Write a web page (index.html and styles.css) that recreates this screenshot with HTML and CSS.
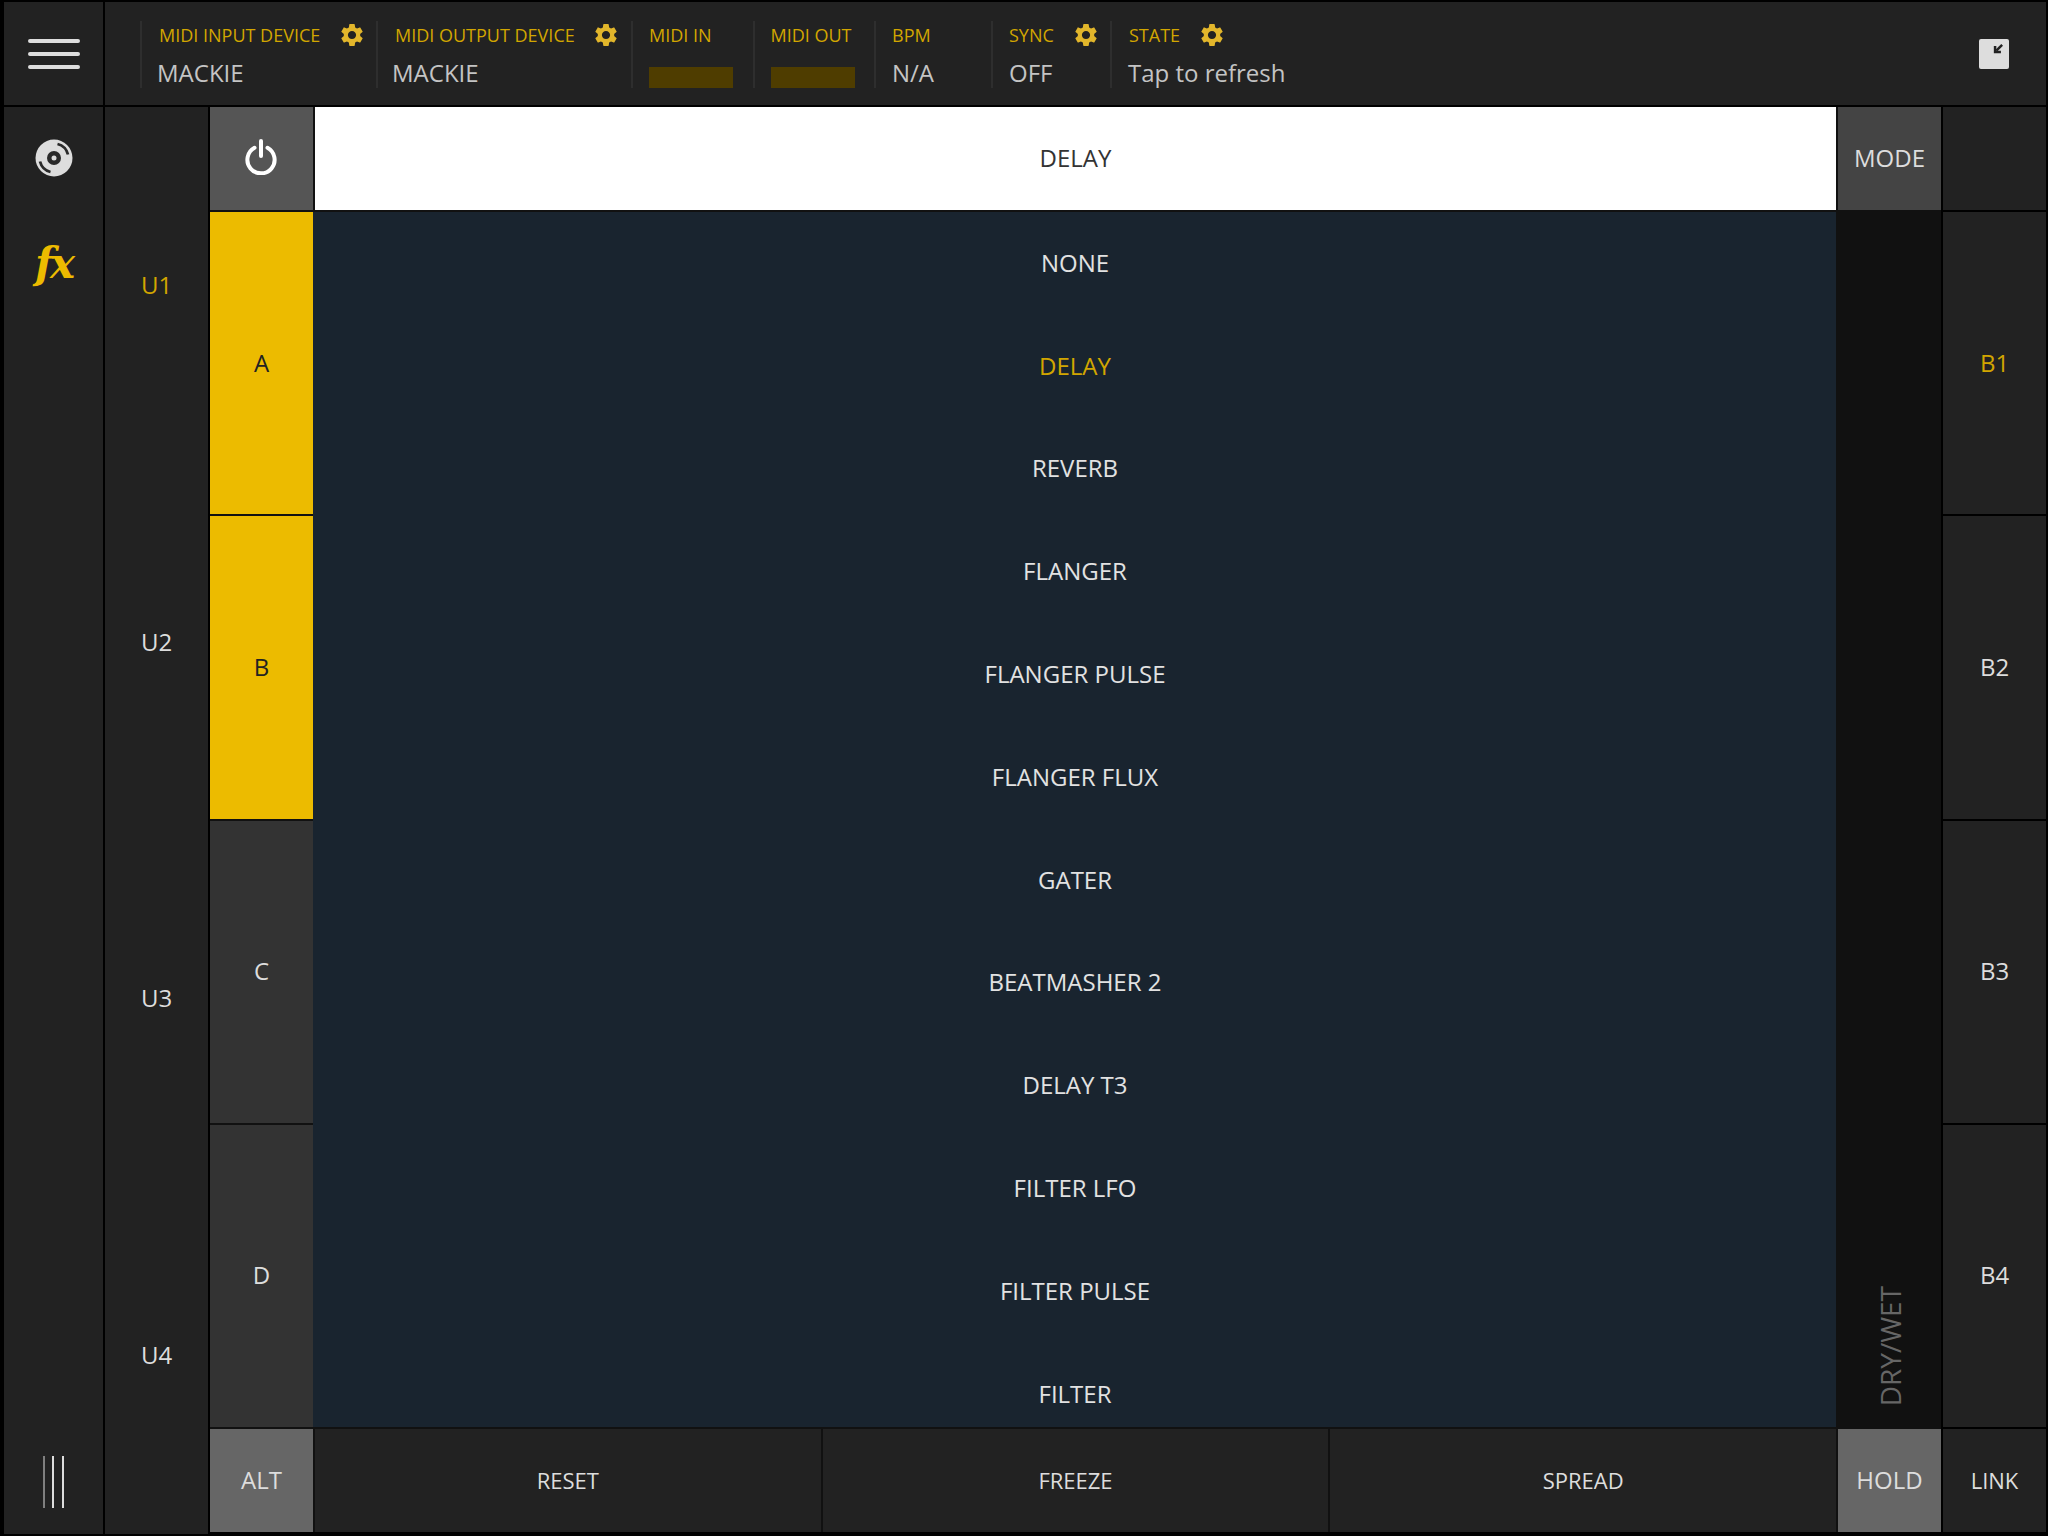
FILE: index.html
```html
<!DOCTYPE html>
<html lang="en">
<head>
  <meta charset="UTF-8" />
  <title>FX Controller</title>
  <link rel="stylesheet" href="styles.css">
</head>
<body>
  <svg class="defs" width="0" height="0">
    <symbol id="gear" viewBox="2.5 1.5 19 21">
      <path fill-rule="evenodd" d="M19.14 12.94c.04-.3.06-.61.06-.94 0-.32-.02-.64-.07-.94l2.03-1.58a.49.49 0 0 0 .12-.61l-1.92-3.32a.488.488 0 0 0-.59-.22l-2.39.96c-.5-.38-1.03-.7-1.62-.94l-.36-2.54a.484.484 0 0 0-.48-.41h-3.84c-.24 0-.43.17-.47.41l-.36 2.54c-.59.24-1.13.57-1.62.94l-2.39-.96c-.22-.08-.47 0-.59.22L2.74 8.87c-.12.21-.08.47.12.61l2.03 1.58c-.05.3-.09.63-.09.94s.02.64.07.94l-2.03 1.58a.49.49 0 0 0-.12.61l1.92 3.32c.12.22.37.29.59.22l2.39-.96c.5.38 1.03.7 1.62.94l.36 2.54c.05.24.24.41.48.41h3.84c.24 0 .44-.17.47-.41l.36-2.54c.59-.24 1.13-.56 1.62-.94l2.39.96c.22.08.47 0 .59-.22l1.92-3.32c.12-.22.07-.47-.12-.61l-2.01-1.58zM12 15.6c-1.98 0-3.6-1.62-3.6-3.6s1.62-3.6 3.6-3.6 3.6 1.62 3.6 3.6-1.62 3.6-3.6 3.6z"/>
    </symbol>
  </svg>

  <div class="app">
    <div class="cell menu-btn">
      <svg width="52" height="32" viewBox="0 0 52 32"><path d="M2 3H50M2 16H50M2 29H50" stroke="#ddd" stroke-width="4" stroke-linecap="round"/></svg>
    </div>

    <header class="topbar">
      <div class="info w-input">
        <div class="info-label">MIDI INPUT DEVICE <svg class="gear"><use href="#gear"/></svg></div>
        <div class="info-value">MACKIE</div>
      </div>
      <div class="info w-output">
        <div class="info-label">MIDI OUTPUT DEVICE <svg class="gear"><use href="#gear"/></svg></div>
        <div class="info-value">MACKIE</div>
      </div>
      <div class="info w-midi">
        <div class="info-label">MIDI IN</div>
        <div class="led"></div>
      </div>
      <div class="info w-midi">
        <div class="info-label">MIDI OUT</div>
        <div class="led"></div>
      </div>
      <div class="info w-bpm">
        <div class="info-label">BPM</div>
        <div class="info-value">N/A</div>
      </div>
      <div class="info w-sync">
        <div class="info-label">SYNC <svg class="gear"><use href="#gear"/></svg></div>
        <div class="info-value">OFF</div>
      </div>
      <div class="info w-state">
        <div class="info-label">STATE <svg class="gear"><use href="#gear"/></svg></div>
        <div class="info-value">Tap to refresh</div>
      </div>
      <div class="restore">
        <svg width="10" height="10" viewBox="0 0 12 12"><path d="M11 1L4 8" stroke="#222" stroke-width="3"/><path d="M1 2.5V11H9.500V8H4V2.500Z" fill="#222"/></svg>
      </div>
    </header>

    <nav class="sidebar">
      <div class="side-item">
        <svg width="38" height="38" viewBox="0 0 38 38">
          <circle cx="19" cy="19" r="18.500" fill="#ddd"/>
          <circle cx="19" cy="19" r="7" fill="#2a2a2a"/>
          <circle cx="19" cy="19" r="2.500" fill="#ddd"/>
          <path d="M22.500 5A14.500 14.500 0 0 1 33 15.500M15.500 33A14.500 14.500 0 0 1 5 22.500" fill="none" stroke="#2a2a2a" stroke-width="2.800"/>
        </svg>
      </div>
      <div class="side-item fx-icon">fx</div>
      <div class="side-spacer"></div>
      <div class="side-item">
        <svg width="22" height="52" viewBox="0 0 22 52"><path d="M1 0V52" stroke="#ddd"/><path d="M10 0V52M20 0V52" stroke="#ddd" stroke-width="2"/></svg>
      </div>
    </nav>

    <div class="ucol">
      <div class="u-label on">U1</div>
      <div class="u-label">U2</div>
      <div class="u-label">U3</div>
      <div class="u-label">U4</div>
    </div>

    <div class="center">
      <div class="center-top">
        <div class="cell power">
          <svg width="32" height="36" viewBox="0 0 32 36"><path d="M9.500 8.800A13.600 13.600 0 1 0 22.500 8.800" fill="none" stroke="#fff" stroke-width="4" stroke-linecap="round"/><path d="M16 2V17" stroke="#fff" stroke-width="4" stroke-linecap="round"/></svg>
        </div>
        <div class="cell selected">DELAY</div>
        <div class="cell mode">MODE</div>
      </div>
      <div class="center-mid">
        <div class="pads">
          <div class="cell pad on">A</div>
          <div class="cell pad on">B</div>
          <div class="cell pad">C</div>
          <div class="cell pad">D</div>
        </div>
        <div class="fx-list">
          <div class="fx-item">NONE</div>
          <div class="fx-item on">DELAY</div>
          <div class="fx-item">REVERB</div>
          <div class="fx-item">FLANGER</div>
          <div class="fx-item">FLANGER PULSE</div>
          <div class="fx-item">FLANGER FLUX</div>
          <div class="fx-item">GATER</div>
          <div class="fx-item">BEATMASHER 2</div>
          <div class="fx-item">DELAY T3</div>
          <div class="fx-item">FILTER LFO</div>
          <div class="fx-item">FILTER PULSE</div>
          <div class="fx-item">FILTER</div>
        </div>
        <div class="drywet"><span>DRY/WET</span></div>
      </div>
      <div class="center-bottom">
        <div class="cell alt">ALT</div>
        <div class="cell act">RESET</div>
        <div class="cell act">FREEZE</div>
        <div class="cell act">SPREAD</div>
        <div class="cell alt">HOLD</div>
      </div>
    </div>

    <div class="bcol">
      <div class="cell"></div>
      <div class="cell b-btn on">B1</div>
      <div class="cell b-btn">B2</div>
      <div class="cell b-btn">B3</div>
      <div class="cell b-btn">B4</div>
      <div class="cell act">LINK</div>
    </div>
  </div>
</body>
</html>
```

FILE: styles.css
```css
* {
  box-sizing: border-box;
}
html, body {
  margin: 0;
  height: 100%;
}
body {
  background: #000;
  color: #ddd;
  font-family: "Open Sans", sans-serif;
  font-size: 24px;
  overflow: hidden;
}
.defs {
  position: absolute;
}
.app {
  display: grid;
  grid-template-columns: 99px 103px 1731px 103px;
  grid-template-rows: 103px 1427px;
  gap: 2px;
  padding: 2px 2px 0 4px;
  height: 1536px;
}
.cell {
  display: flex;
  align-items: center;
  justify-content: center;
  background: #222;
  padding-bottom: 2px;
}
.menu-btn {
  padding-bottom: 0;
}

/* top bar */
.topbar {
  grid-column: 2 / 5;
  display: flex;
  align-items: flex-start;
  background: #222;
  padding: 19px 37px 0 35px;
}
.info {
  height: 67px;
  border-left: 2px solid #2e2e2e;
  padding-left: 16px;
  flex: none;
}
.w-input { width: 236px; }
.w-output { width: 255px; }
.w-midi { width: 121.5px; }
.w-bpm { width: 117px; }
.w-sync { width: 119px; }
.w-state { width: 300px; }
.info-label {
  color: #d2a600;
  font-size: 18px;
  line-height: 28px;
  height: 28px;
  white-space: nowrap;
}
.w-input .info-label, .w-output .info-label, .w-state .info-label {
  margin-left: 1px;
}
.gear {
  width: 22px;
  height: 24px;
  fill: #e2b62b;
  margin-left: 16px;
  vertical-align: -5px;
}
.info-value {
  color: #c4c4c4;
  font-size: 24px;
  line-height: 34px;
  margin-top: 7px;
}
.w-input .info-value { margin-left: -1px; }
.w-output .info-value { margin-left: -2px; }
.led {
  width: 84px;
  height: 21px;
  margin: 18px 0 0 0;
  background: #4f3d00;
}
.restore {
  margin-left: auto;
  margin-top: 18px;
  width: 30px;
  height: 30px;
  border-radius: 2px;
  background: #ddd;
  display: flex;
  align-items: flex-start;
  justify-content: flex-end;
  padding: 5px 6px 0 0;
}

/* left columns */
.sidebar {
  background: #222;
  display: flex;
  flex-direction: column;
}
.side-item {
  height: 105px;
  flex: none;
  display: flex;
  align-items: center;
  justify-content: center;
  padding-bottom: 3px;
}
.side-item:last-child {
  padding-bottom: 0;
}
.side-spacer {
  flex: 1;
}
.fx-icon {
  color: #ecbb00;
  font-family: "DejaVu Serif", serif;
  font-style: italic;
  font-weight: bold;
  font-size: 42px;
  letter-spacing: -3px;
}
.ucol {
  background: #222;
  display: grid;
  grid-template-rows: repeat(4, 1fr);
}
.u-label {
  display: flex;
  align-items: center;
  justify-content: center;
  padding-bottom: 2px;
}
.u-label.on, .b-btn.on, .fx-item.on {
  color: #d2a600;
}

/* center panel */
.center {
  background: #111;
  display: grid;
  grid-template-rows: 103px 1215px 103px;
  row-gap: 2px;
  height: 1425px;
}
.center-top {
  display: grid;
  grid-template-columns: 103px 1523px 105px;
}
.center-top .selected {
  margin-left: 2px;
  background: #fff;
  color: #333;
}
.power {
  background: #555;
  padding: 0 2px 4px 0;
}
.mode {
  background: #444;
  margin-left: 2px;
}
.center-mid {
  display: grid;
  grid-template-columns: 103px 1523px 105px;
  min-height: 0;
}
.pads {
  display: grid;
  grid-template-rows: repeat(4, 1fr);
  row-gap: 2px;
}
.pad {
  background: #333;
}
.pad.on {
  background: #ecbb00;
  color: #222;
}
.fx-list {
  background: #19242f;
  overflow: hidden;
  padding-left: 1px;
}
.fx-item {
  height: 102.8px;
  display: flex;
  align-items: center;
  justify-content: center;
  padding-bottom: 2px;
  color: #e2e2e2;
}
.drywet {
  background: #111;
  display: flex;
  align-items: flex-end;
  justify-content: center;
  padding: 0 0 21px 2px;
}
.drywet span {
  writing-mode: vertical-rl;
  transform: rotate(180deg);
  color: #666;
  font-size: 28px;
}
.center-bottom {
  display: grid;
  grid-template-columns: 103px repeat(3, 1fr) 103px;
  column-gap: 2px;
}
.alt {
  background: #666;
}
.act {
  font-size: 22px;
}

/* right column */
.bcol {
  display: grid;
  grid-template-rows: 103px repeat(4, 1fr) 103px;
  row-gap: 2px;
  height: 1425px;
}
```
